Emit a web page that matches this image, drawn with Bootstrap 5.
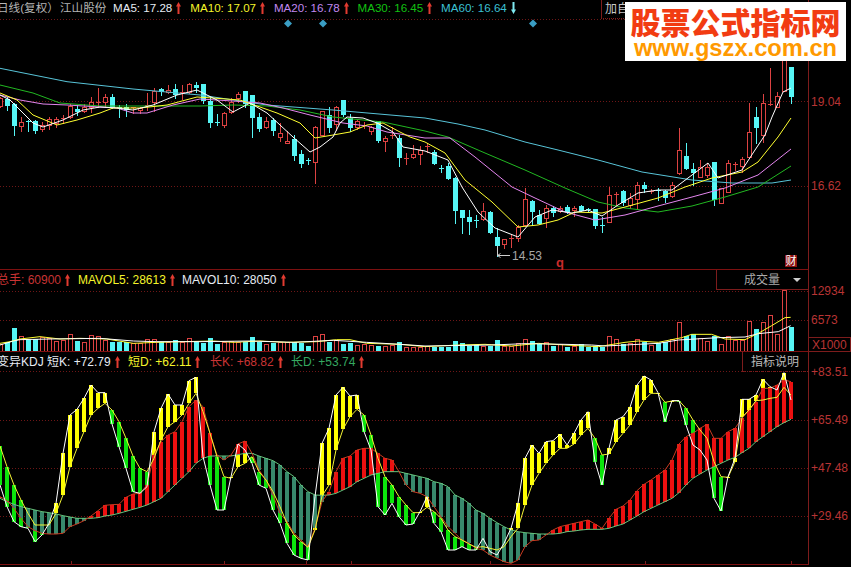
<!DOCTYPE html>
<html lang="zh-CN">
<head>
<meta charset="utf-8">
<title>江山股份 日线</title>
<link href="https://cdn.jsdelivr.net/npm/bootstrap@5.3.0/dist/css/bootstrap.min.css" rel="stylesheet">
<style>
html,body{background:#000;margin:0;overflow:hidden}
.term{width:851px;height:567px;background:#000;font-family:"Liberation Sans","Noto Sans CJK SC",sans-serif;font-size:12px;line-height:1;position:relative;overflow:hidden}
.pane-price{height:270px}
.pane-vol{height:82px}
.pane-kdj{height:215px}
.plot{width:809px;border-right:1px solid #7d1c1c;border-bottom:1px solid #7d1010}
.pane-kdj .plot{height:213px}
.axis{width:42px}
.layer{position:absolute;left:0;top:0;width:808px}
.qhead{position:relative;height:19px;white-space:nowrap}
.qhead>span{flex:none;padding-top:4px}
.qhead-top{font-size:11.6px}
.qhead-top>span{padding-top:2px}
.cut{margin-left:-3px}
.s-name{width:63px}
.s-stock{width:53px}
.w-a{width:77.3px}.w-b{width:83.6px}
.s1{width:81px}.s2{width:104px}
.k0{width:50px}.k1{width:81px}.k2{width:82px}.k3{width:81px}
.c-white{color:#e6ecf4}.c-gray{color:#b5b5b5}.c-yel{color:#f5f52a}.c-pur{color:#c088f0}
.c-grn{color:#12c012}.c-cy{color:#3cc0d4}.c-red{color:#c83434}.c-dgr{color:#35a860}
.arw{width:5px;height:12px;vertical-align:-2px;margin-left:4px}
.btn-add{margin-left:auto;width:207px;height:19px;border-left:1px solid #7d1c1c;border-bottom:1px dotted #7d1c1c;color:#c8c8c8;font-size:12px;padding:3px 0 0 3px}
.sel-box{margin-left:auto;width:92px;height:20px;border-left:1px solid #7d1c1c;border-bottom:1px solid #7d1c1c;color:#aaa;font-size:12px;padding:4px 7px 0 27px}
.tri{width:0;height:0;border-left:4px solid transparent;border-right:4px solid transparent;border-top:4px solid #d0d0d0}
.doc-box{margin-left:auto;width:66px;height:20px;border-left:1px solid #7d1c1c;border-bottom:1px dotted #7d1c1c;color:#bbb;font-size:12px;padding:4px 0 0 8px}
.tick{position:absolute;left:2px;color:#b83434;font-size:12px;transform:translateY(-50%)}
.x-box{margin-top:auto;height:15px;border:1px solid #7d1c1c;border-left:0;color:#b83434;font-size:12px;padding:1px 0 0 3px}
.brand{position:absolute;left:625px;top:2px;width:221px;height:59px;background:#fff;text-align:center;padding-top:4px}
.brand-a{font-weight:900;font-size:30px;line-height:31px;color:#f23c12;font-family:"Noto Sans CJK SC","Liberation Sans",sans-serif}
.brand-b{font-weight:700;font-size:23.7px;line-height:22px;color:#ff9900;font-family:"Liberation Sans",sans-serif}
.low-val{position:absolute;left:512px;top:250px;color:#a8a8a8;font-size:12px}
.q-mark{position:absolute;left:556px;top:256px;color:#c92b2b;font-weight:700;font-size:13px}
.cai{position:absolute;left:785px;top:255px;width:12px;height:12px;background:#8c1212;color:#fff;font-size:11px;line-height:12px;text-align:center}
</style>
</head>
<body>
<svg width="0" height="0" class="d-block"><defs>
<symbol id="up" viewBox="0 0 5 12"><path d="M2.5 0 5 4.5H3.5V12H1.5V4.5H0Z" fill="#e23b30"/></symbol>
<symbol id="dn" viewBox="0 0 5 12"><path d="M2.5 12 0 7.5H1.5V0H3.5V7.5H5Z" fill="#7fe8f0"/></symbol>
</defs></svg>
<main class="term d-flex flex-column">
  <section class="pane-price d-flex">
    <div class="plot position-relative">
      <svg class="layer" id="sv1" height="269" viewBox="0 0 808 269"></svg>
      <div class="qhead qhead-top d-flex">
        <span class="c-gray cut s-name">日线(复权）</span>
        <span class="c-gray s-stock">江山股份</span>
        <span class="c-white w-a">MA5: 17.28<svg class="arw"><use href="#up"/></svg></span>
        <span class="c-yel w-b">MA10: 17.07<svg class="arw"><use href="#up"/></svg></span>
        <span class="c-pur w-b">MA20: 16.78<svg class="arw"><use href="#up"/></svg></span>
        <span class="c-grn w-b">MA30: 16.45<svg class="arw"><use href="#up"/></svg></span>
        <span class="c-cy">MA60: 16.64<svg class="arw"><use href="#dn"/></svg></span>
        <div class="btn-add">加自</div>
      </div>
      <span class="low-val">14.53</span>
      <span class="q-mark">q</span>
      <span class="cai">财</span>
    </div>
    <div class="axis position-relative">
      <span class="tick" style="top:102px">19.04</span>
      <span class="tick" style="top:186px">16.62</span>
    </div>
  </section>
  <section class="pane-vol d-flex">
    <div class="plot position-relative">
      <svg class="layer" id="sv2" height="81" viewBox="0 270 808 81"></svg>
      <div class="qhead d-flex">
        <span class="c-red cut s1">总手: 60900<svg class="arw"><use href="#up"/></svg></span>
        <span class="c-yel s2">MAVOL5: 28613<svg class="arw"><use href="#up"/></svg></span>
        <span class="c-white">MAVOL10: 28050<svg class="arw"><use href="#up"/></svg></span>
        <div class="sel-box d-flex justify-content-between align-items-start"><span>成交量</span><span class="tri mt-1"></span></div>
      </div>
    </div>
    <div class="axis position-relative d-flex flex-column">
      <span class="tick" style="top:21px">12934</span>
      <span class="tick" style="top:50px">6573</span>
      <div class="x-box">X1000</div>
    </div>
  </section>
  <section class="pane-kdj d-flex">
    <div class="plot position-relative">
      <svg class="layer" id="sv3" height="212" viewBox="0 352 808 212"></svg>
      <div class="qhead d-flex">
        <span class="c-white cut k0">变异KDJ</span>
        <span class="c-white k1">短K: +72.79<svg class="arw"><use href="#up"/></svg></span>
        <span class="c-yel k2">短D: +62.11<svg class="arw"><use href="#up"/></svg></span>
        <span class="c-red k3">长K: +68.82<svg class="arw"><use href="#up"/></svg></span>
        <span class="c-dgr">长D: +53.74<svg class="arw"><use href="#up"/></svg></span>
        <div class="doc-box">指标说明</div>
      </div>
    </div>
    <div class="axis position-relative">
      <span class="tick" style="top:20px">+83.51</span>
      <span class="tick" style="top:68px">+65.49</span>
      <span class="tick" style="top:116px">+47.48</span>
      <span class="tick" style="top:164px">+29.46</span>
    </div>
  </section>
  <div class="brand">
    <div class="brand-a">股票公式指标网</div>
    <div class="brand-b">www.gszx.com.cn</div>
  </div>
</main>
<script>
(function(){
var RED='#dc4242',CY='#56f6f6';
function el(h,s){h.innerHTML=s;}
function hdash(y,x2){return '<line x1="0" x2="'+(x2||808)+'" y1="'+y+'" y2="'+y+'" stroke="#6e1616" stroke-dasharray="1 2"/>';}
function poly(p,c,w){return '<polyline fill="none" stroke="'+c+'" stroke-width="'+(w||1)+'" points="'+p.map(function(a){return a[0]+','+a[1]}).join(' ')+'"/>';}
function X(i){return 7*i+.5;}
/* candles: type, high, top, bottom, low */
var Z=[['r',290,295,318,320],['c',290,296,315,330],['c',310,312,375,405],['r',350,367,378,392],['c',360,362,364,392],['c',360,363,390,400],['r',365,375,388,392],['r',350,358,375,388],['r',350,358,370,382],['r',345,355,358,370],['r',312,318,352,355],['c',315,328,332,345],['r',312,322,333,335],['r',292,305,320,335],['r',265,305,308,320],['r',282,292,305,320],['c',283,292,320,325],['c',315,320,322,352],['c',312,320,326,348],['r',320,320,322,340],['r',320,325,330,340],['r',278,315,318,330],['r',265,272,305,332],['c',265,268,274,285],['r',255,270,275,280],['c',252,267,283,295],['r',255,275,278,298],['r',250,252,275,280],['c',245,255,260,275],['c',252,253,300,310],['c',290,302,365,382],['c',342,367,370,375],['r',335,340,375,380],['r',295,305,335,340],['r',275,283,295,305],['c',272,273,310,320],['c',285,286,350,410],['c',340,352,385,392],['r',350,363,382,385],['c',355,360,390,405],['r',370,400,410,423]]
.map(function(a){return [a[0],a[1]/3,a[2]/3,a[3]/3,a[4]/3];});
var A=[['r',131,141,143,143],['c',135,139,155,160],['c',150,154,163,167],['c',158,160,161,164],['r',126,127,162,183],['r',111,111,135,135],['c',107,115,127,132],['r',106,107,124,130],['c',100,100,114,116],['c',114,118,127,131],['r',120,121,127,129],['r',122,125,126,128],['r',126,127,131,134],['c',121,121,140,142],['r',136,138,141,151],['r',127,135,136,138],['c',135,138,157,166],['r',153,158,159,164],['r',145,154,157,158],['r',146,150,154,164],['r',143,146,147,152],['c',150,152,163,164],['c',165,168,169,172],['c',163,166,178,179],['c',177,178,210,223],['c',210,210,217,233],['c',210,217,221,234],['c',215,220,221,227],['r',203,211,219,220],['c',211,212,232,233],['c',228,237,245,256],['r',239,239,244,248],['r',234,238,239,247],['r',225,227,238,241],['r',188,199,225,226],['c',200,201,211,225],['c',210,215,223,224],['r',205,208,218,227],['c',206,208,212,216],['r',206,208,211,212],['c',205,207,211,213],['r',206,208,210,216],['c',205,206,210,211],['c',208,209,210,212],['c',209,209,225,228],['c',217,225,226,232],['r',187,195,222,222],['r',192,194,195,205],['c',190,191,202,205],['r',193,198,205,208],['r',182,185,199,208],['c',182,185,188,192],['r',189,191,192,193],['c',188,190,191,200],['c',190,191,197,202],['r',182,185,196,197],['r',128,150,173,174],['c',143,156,168,169],['c',163,169,172,185],['r',160,167,177,177],['r',163,167,175,177],['c',162,162,199,205],['r',188,188,203,203],['r',160,163,192,192],['r',162,164,165,170],['r',157,159,166,172],['r',103,132,157,157],['c',107,117,127,143],['r',94,103,135,142],['r',68,104,105,105],['r',92,96,107,107],['r',50,50,91,91],['c',67,67,96,103]];
var C=Z.concat(A),s=hdash(19.5)+hdash(101.5)+hdash(186.5);
var d=[[288,'#3a9ec4'],[323,'#3a9ec4'],[533,'#3a9ec4']];
d.forEach(function(m){s+='<path d="M'+m[0]+' 19.5l4 4-4 4-4-4z" fill="'+m[1]+'"/>';});
s+='<g shape-rendering="crispEdges">';
C.forEach(function(c,i){
 var x=X(i),col=c[0]=='r'?RED:CY,h=Math.round(c[1]),t=Math.round(c[2]),b=Math.round(c[3]),l=Math.round(c[4]);
 s+='<line x1="'+x+'" x2="'+x+'" y1="'+h+'" y2="'+(l+1)+'" stroke="'+col+'"/>';
 if(b-t<=1){s+='<rect x="'+(x-2.5)+'" y="'+t+'" width="5" height="'+Math.max(1,b-t)+'" fill="'+col+'"/>';}
 else if(c[0]=='r'){s+='<rect x="'+(x-2)+'" y="'+(t+.5)+'" width="4" height="'+(b-t)+'" fill="#000" stroke="'+col+'"/>';}
 else{s+='<rect x="'+(x-2.5)+'" y="'+t+'" width="5" height="'+(b-t+1)+'" fill="'+col+'"/>';}
});
s+='</g>';
s+=poly([[0,68.3],[67,81.7],[133,89],[200,95],[267,105],[333,110],[425,118],[458,124],[485,130],[525,142],[558,150],[598,160],[642,172],[692,180],[732,183],[772,183],[791,180]],'#58c4d8');
s+=poly([[0,85],[33,93],[60,103],[100,106],[150,106],[200,106],[233,105],[267,106],[300,110],[333,117],[383,122],[425,131],[448,137],[485,153],[525,170],[565,188],[598,202],[625,208],[658,212],[692,206],[725,197],[758,187],[791,166]],'#22b822');
s+=poly([[0,95],[20,100],[43,104],[67,105],[100,107],[117,108],[133,113],[147,113],[173,105],[200,99],[233,101],[260,103],[283,108],[310,115],[343,123],[367,126],[387,132],[425,138],[450,138],[475,157],[512,187],[535,198],[565,212],[595,220],[625,215],[658,206],[692,197],[725,188],[758,175],[791,149]],'#e486ee');
s+=poly([[0,93],[17,100],[33,115],[57,125],[77,120],[100,113],[113,108],[140,108],[167,105],[197,97],[213,98],[240,100],[277,113],[300,123],[315,138],[333,135],[350,132],[367,125],[383,123],[400,132],[410,137],[425,142],[445,153],[465,180],[492,202],[518,227],[538,225],[558,220],[575,212],[602,213],[625,207],[658,198],[685,187],[712,178],[742,172],[758,162],[778,137],[791,118]],'#ffff30');
s+=poly([[0,95],[10,100],[20,110],[33,123],[43,127],[63,120],[83,110],[100,107],[117,108],[133,110],[153,105],[177,95],[197,90],[217,100],[233,112],[250,103],[267,113],[293,137],[310,152],[320,147],[333,137],[340,123],[347,117],[363,118],[377,123],[393,132],[403,147],[425,151],[448,160],[462,187],[478,212],[495,228],[518,237],[535,217],[552,210],[572,213],[588,210],[602,216],[618,205],[638,193],[658,190],[672,190],[688,178],[708,163],[718,178],[742,170],[755,150],[765,135],[772,117],[783,92],[791,88]],'#fff');
s+='<path d="M497.5 246V255.5H510M497.5 255.5l3-2M497.5 255.5l3 2" fill="none" stroke="#cfcfcf"/>';
el(document.getElementById('sv1'),s);

/* volume */
var V=[[238,'r'],[232,'c'],[190,'c'],[212,'r'],[225,'c'],[222,'c'],[215,'r'],[218,'r'],[228,'r'],[225,'r'],[208,'r'],[228,'c'],[232,'r'],[210,'r'],[213,'r'],[225,'r'],[232,'c'],[230,'c'],[230,'c'],[235,'r'],[235,'r'],[223,'r'],[223,'r'],[232,'c'],[232,'r'],[226,'c'],[232,'r'],[220,'r'],[232,'c'],[235,'c'],[220,'c'],[237,'c'],[230,'r'],[228,'r'],[230,'r'],[232,'c'],[216,'c'],[230,'c'],[238,'r'],[235,'c'],[232,'r'],[230,'r'],[232,'c'],[234,'c'],[243,'c'],[214,'r'],[208,'r'],[230,'c'],[225,'r'],[238,'c'],[235,'c'],[240,'r'],[238,'r'],[240,'r'],[242,'c'],[242,'r'],[240,'r'],[232,'c'],[245,'r'],[245,'r'],[245,'r'],[243,'r'],[247,'c'],[247,'c'],[245,'c'],[228,'c'],[235,'c'],[242,'c'],[240,'c'],[243,'r'],[243,'c'],[226,'c'],[242,'r'],[243,'r'],[235,'r'],[222,'r'],[228,'c'],[237,'c'],[232,'r'],[243,'c'],[238,'r'],[246,'c'],[243,'r'],[238,'c'],[245,'c'],[243,'c'],[245,'c'],[213,'r'],[223,'r'],[238,'c'],[235,'r'],[223,'r'],[232,'c'],[240,'r'],[233,'c'],[232,'c'],[222,'r'],[172,'r'],[212,'c'],[208,'c'],[220,'r'],[228,'r'],[213,'c'],[237,'r'],[212,'r'],[226,'r'],[226,'r'],[168,'r'],[192,'c'],[172,'r'],[150,'r'],[208,'r'],[76,'r'],[186,'c']];
s=hdash(291.5)+hdash(320.5)+'<g shape-rendering="crispEdges">';
V.forEach(function(v,i){
 var x=X(i),t=Math.round(265+v[0]/3);
 if(v[1]=='r'){s+='<rect x="'+(x-2)+'" y="'+(t+.5)+'" width="4" height="'+(351-t)+'" fill="#000" stroke="'+RED+'"/>';}
 else{s+='<rect x="'+(x-2.5)+'" y="'+t+'" width="5" height="'+(351-t)+'" fill="'+CY+'"/>';}
});
s+='</g>';
function vz(a,off){return a.map(function(p){return [off+p[0]/3,265+p[1]/3];});}
var vyl=vz([[0,235],[30,230],[60,222],[120,215],[180,222],[240,220],[320,222],[400,235],[470,232],[550,230],[640,228],[700,232],[780,228],[860,232],[950,230],[1010,224],[1050,224],[1100,235],[1200,238],[1275,245]],0).concat(vz([[100,240],[180,238],[260,243],[340,235],[420,240],[520,245],[600,232],[640,228],[700,232],[770,218],[800,208],[860,208],[900,222],[960,224],[1000,205],[1040,182],[1080,158],[1097,157]],425));
var vwh=vz([[0,240],[40,228],[60,224],[150,222],[300,220],[400,228],[470,230],[600,230],[750,228],[880,232],[1000,226],[1100,232],[1200,238],[1275,243]],0).concat(vz([[200,240],[300,236],[420,238],[500,240],[540,243],[700,235],[760,225],[880,218],[960,216],[1000,206],[1060,200],[1097,182]],425));
s+=poly(vyl,'#ffff30')+poly(vwh,'#fff');
el(document.getElementById('sv2'),s);

/* KDJ: short K, short D, long K, long D */
var K=[[345,228,380,385],[410,290,392,395],[455,345,415,403],[470,390,445,410],[475,430,470,415],[515,465,482,420],[495,465,490,425],[460,465,492,428],[400,430,492,432],[250,375,490,437],[135,290,470,441],[118,235,462,445],[85,185,452,445],[45,135,438,445],[68,115,422,443],[68,100,406,438],[162,120,404,435],[230,155,403,430],[295,205,382,424],[365,258,372,418],[370,295,370,412],[350,305,345,405],[185,265,255,395],[115,210,215,385],[72,170,195,365],[105,155,185,345],[105,135,155,325],[32,100,110,305],[22,70,90,280],[260,125,110,265],[345,190,190,258],[420,260,255,258],[420,320,270,258],[320,325,255,258],[222,290,222,254],[240,280,213,250],[280,260,250,250],[345,305,300,258],[355,330,330,265],[420,365,375,272],[460,410,430,285],
[520,460,455,305],[555,495,490,320],[565,515,510,345],[570,532,530,365],[380,480,475,375],[220,378,395,376],[175,345,365,375],[75,240,305,370],[52,178,265,360],[78,140,258,350],[75,118,240,335],[185,135,235,325],[240,195,235,315],[410,265,250,310],[435,320,265,305],[400,345,270,305],[440,380,305,305],[465,405,345,310],[462,428,365,315],[425,428,370,320],[380,412,380,325],[460,425,410,335],[485,445,440,340],[540,480,470,350],[540,500,490,375],[530,510,510,385],[540,522,520,400],[540,532,535,420],[505,530,540,430],[545,535,555,445],[555,540,565,458],[520,530,575,470],[475,500,580,480],[400,475,570,485],[265,405,530,488],[225,345,512,490],[250,310,510,492],[215,280,495,492],[212,255,480,492],[193,235,470,490],
[225,235,465,485],[190,222,460,483],[150,195,455,480],[125,175,450,478],[275,205,462,478],[345,255,475,478],[235,252,445,475],[150,215,418,468],[140,190,408,462],[112,165,390,450],[45,125,362,438],[18,90,343,425],[30,70,330,415],[68,70,315,405],[155,97,300,395],[92,93,270,385],[92,92,222,368],[165,115,200,345],[225,150,190,325],[240,180,175,312],[270,205,163,300],[385,275,205,290],[423,320,205,280],[320,322,185,270],[265,275,175,262],[88,142,145,248],[88,120,120,235],[75,92,95,215],[28,90,55,200],[50,85,55,185],[60,82,45,170],[8,52,30,158],[90,75,35,148]];
function ky(z){return 370+z/3;}
s='';[371.5,420.5,468.5,516.5].forEach(function(y){s+=hdash(y);});
s+='<g shape-rendering="crispEdges">';
K.forEach(function(k,i){
 var x=7*i-2,w=ky(k[0]),y=ky(k[1]);
 s+='<rect x="'+x+'" y="'+Math.min(w,y)+'" width="4" height="'+Math.max(1,Math.abs(w-y))+'" fill="'+(k[0]<k[1]?'#ffff00':'#0ce40c')+'"/>';
});
K.forEach(function(k,i){
 var x=7*i-2,r=ky(k[2]),g=ky(k[3]);
 s+='<rect x="'+x+'" y="'+Math.min(r,g)+'" width="4" height="'+Math.max(.5,Math.abs(r-g))+'" fill="'+(k[2]<k[3]?'#ec1010':'#38896c')+'"/>';
});
s+='</g>';
function kl(n){return K.map(function(k,i){return [7*i,ky(k[n])];});}
s+=poly(kl(3),'#66c47c')+poly(kl(2),'#c83a20')+poly(kl(1),'#f4f434')+poly(kl(0),'#fff');
[71,224,306,351,490,645,791].forEach(function(x){s+='<line x1="'+(x+.5)+'" x2="'+(x+.5)+'" y1="561" y2="564" stroke="#7d1c1c"/>';});
el(document.getElementById('sv3'),s);
})();
</script>
<script src="https://cdn.jsdelivr.net/npm/bootstrap@5.3.0/dist/js/bootstrap.bundle.min.js"></script>
</body>
</html>
